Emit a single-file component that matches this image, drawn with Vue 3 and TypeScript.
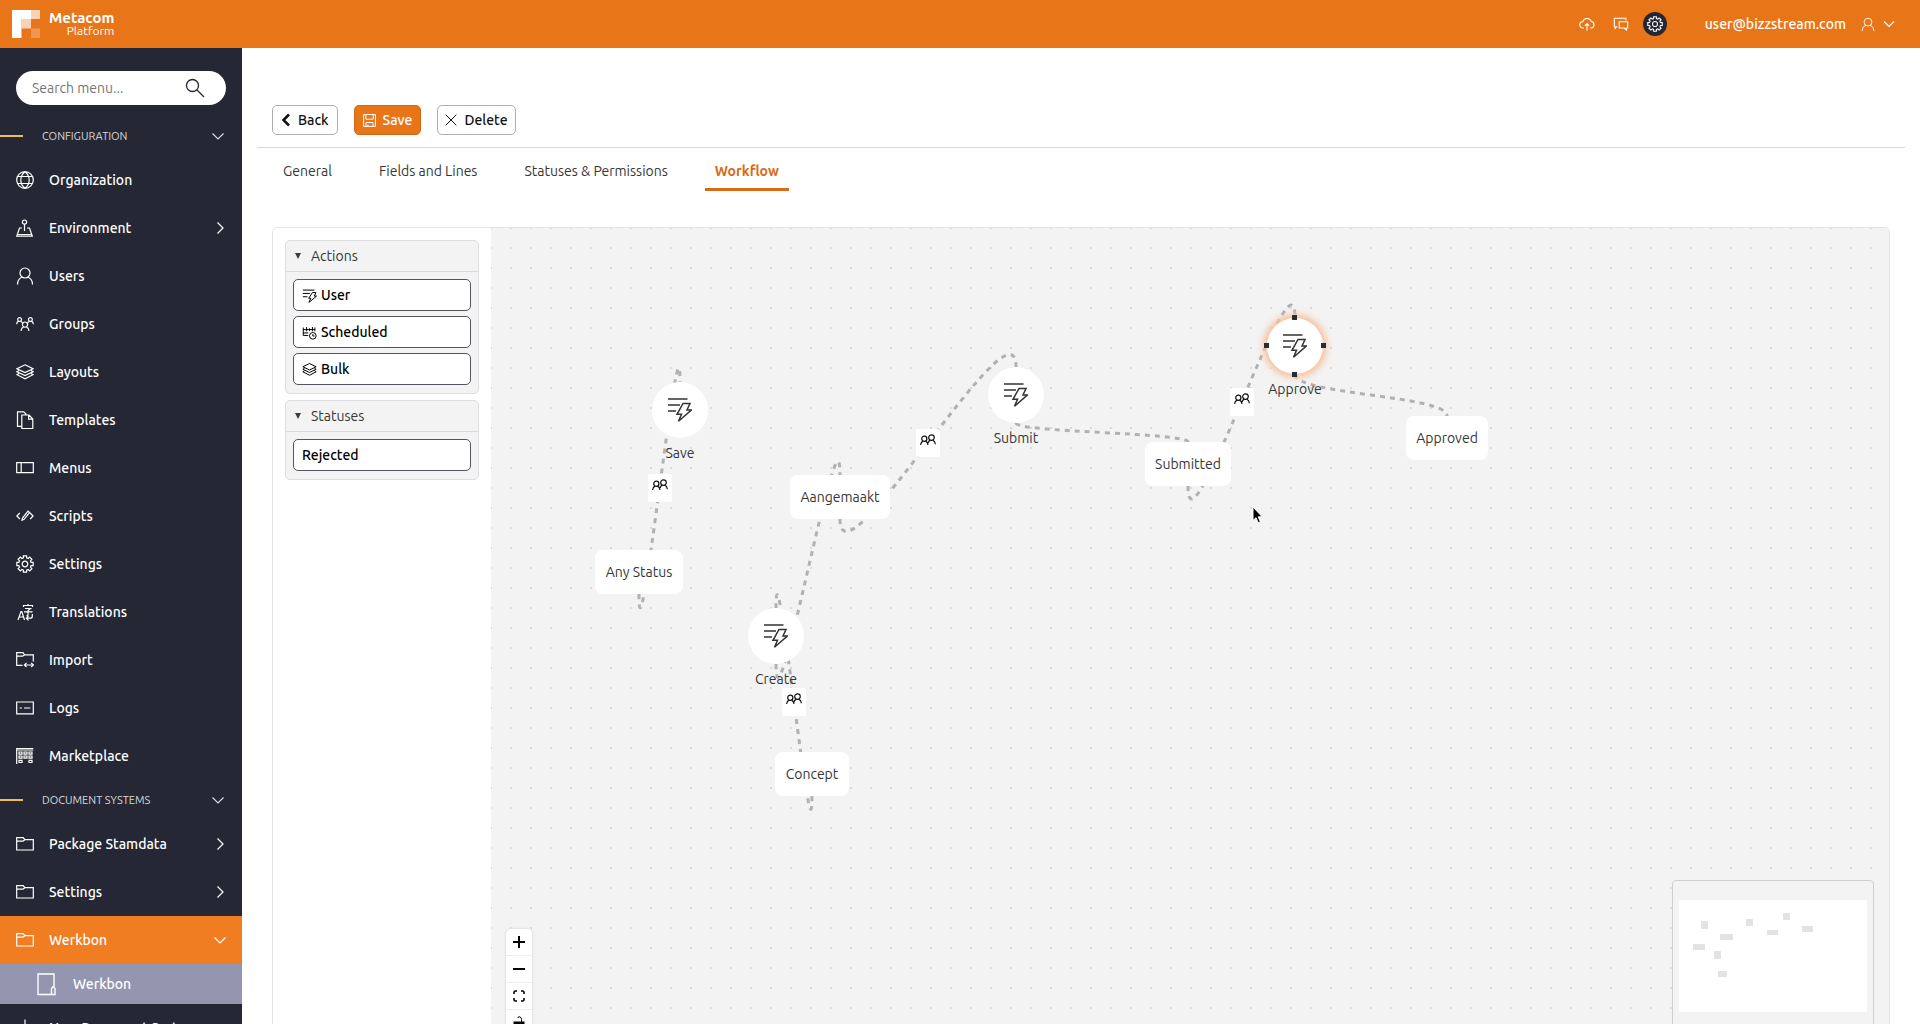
<script setup lang="ts">
interface NavItem { label: string; icon: string; arrow?: 'right' | 'down' }
interface FlowNode { id: string; label: string; kind: 'action' | 'status'; x: number; y: number; w: number; h: number; selected?: boolean }
interface FlowEdge { from: string; to: string; people?: boolean }

const configuration: NavItem[] = [
  { label: 'Organization', icon: 'globe' },
  { label: 'Environment', icon: 'environment', arrow: 'right' },
  { label: 'Users', icon: 'user' },
  { label: 'Groups', icon: 'groups' },
  { label: 'Layouts', icon: 'layers' },
  { label: 'Templates', icon: 'copy' },
  { label: 'Menus', icon: 'menus' },
  { label: 'Scripts', icon: 'script' },
  { label: 'Settings', icon: 'gear' },
  { label: 'Translations', icon: 'translate' },
  { label: 'Import', icon: 'import' },
  { label: 'Logs', icon: 'logs' },
  { label: 'Marketplace', icon: 'market' },
]
const documents: NavItem[] = [
  { label: 'Package Stamdata', icon: 'folder', arrow: 'right' },
  { label: 'Settings', icon: 'folder', arrow: 'right' },
]
const tabs = ['General', 'Fields and Lines', 'Statuses & Permissions', 'Workflow']
const actions = [
  { label: 'User', icon: 'bolt' },
  { label: 'Scheduled', icon: 'schedule' },
  { label: 'Bulk', icon: 'layers' },
]

// x and y are the centre of each node on the canvas
const nodes: FlowNode[] = [
  { id: 'save', label: 'Save', kind: 'action', x: 189, y: 182, w: 56, h: 56 },
  { id: 'submit', label: 'Submit', kind: 'action', x: 525, y: 167, w: 56, h: 56 },
  { id: 'approve', label: 'Approve', kind: 'action', x: 804, y: 118, w: 56, h: 56, selected: true },
  { id: 'create', label: 'Create', kind: 'action', x: 285, y: 408, w: 56, h: 56 },
  { id: 'any', label: 'Any Status', kind: 'status', x: 148, y: 344, w: 88, h: 44 },
  { id: 'made', label: 'Aangemaakt', kind: 'status', x: 349, y: 269, w: 100, h: 44 },
  { id: 'concept', label: 'Concept', kind: 'status', x: 321, y: 546, w: 74, h: 44 },
  { id: 'submitted', label: 'Submitted', kind: 'status', x: 697, y: 236, w: 86, h: 44 },
  { id: 'approved', label: 'Approved', kind: 'status', x: 956, y: 210, w: 82, h: 44 },
]
const edges: FlowEdge[] = [
  { from: 'any', to: 'save', people: true },
  { from: 'concept', to: 'create', people: true },
  { from: 'create', to: 'made' },
  { from: 'made', to: 'submit', people: true },
  { from: 'submit', to: 'submitted' },
  { from: 'submitted', to: 'approve', people: true },
  { from: 'approve', to: 'approved' },
]

function ends(e: FlowEdge) {
  const a = nodes.find(n => n.id === e.from)!
  const b = nodes.find(n => n.id === e.to)!
  return { x1: a.x, y1: a.y + a.h / 2, x2: b.x, y2: b.y - b.h / 2 }
}
function edgePath(e: FlowEdge): string {
  const { x1, y1, x2, y2 } = ends(e)
  const d = y2 - y1
  const c = d >= 0 ? d / 2 : 6.25 * Math.sqrt(-d)
  return `M${x1} ${y1}C${x1} ${y1 + c} ${x2} ${y2 - c} ${x2} ${y2}`
}
function edgeMiddle(e: FlowEdge) {
  const { x1, y1, x2, y2 } = ends(e)
  return { left: Math.round((x1 + x2) / 2) + 'px', top: Math.round((y1 + y2) / 2) + 'px' }
}

const gearPath = (() => {
  const pts: string[] = []
  const add = (r: number, deg: number) => {
    const a = (deg * Math.PI) / 180
    pts.push(`${(9 + r * Math.cos(a)).toFixed(2)} ${(9 + r * Math.sin(a)).toFixed(2)}`)
  }
  for (let k = 0; k < 8; k++) {
    const m = k * 45
    add(6.3, m - 15); add(8.3, m - 11); add(8.3, m + 11); add(6.3, m + 15)
  }
  return 'M' + pts.join('L') + 'Z'
})()

// every glyph is drawn in an 18 by 18 box
const icons: Record<string, string> = {
  globe: 'M9 .7a8.3 8.3 0 1 0 0 16.6A8.3 8.3 0 1 0 9 .7M9 .7C3.4 5 3.4 13 9 17.3M9 .7c5.6 4.3 5.6 12.3 0 16.6M1.600 5.500h14.800M1.600 12.500h14.800',
  environment: 'M8.5 1a2.1 2.1 0 1 0 0 4.200a2.100 2.100 0 1 0 0-4.200M8.500 5.200v6.800M6 9H3.500L.700 17.200h15.600L13.500 9H11M.700 15.500h15.600',
  user: 'M9 1a5 5 0 1 0 0 10A5 5 0 1 0 9 1M1.500 17.500c0-4 2-6.500 5-7.500M16.500 17.500c0-4-2-6.500-5-7.500',
  groups: 'M9 7a2.600 2.600 0 1 0 0 5.200A2.600 2.600 0 1 0 9 7M5 16c.2-2.300 1.200-3.600 2.600-4.300M13 16c-.2-2.300-1.200-3.600-2.600-4.300M3.600 2.600a1.900 1.900 0 1 0 0 3.800a1.900 1.900 0 1 0 0-3.800M14.400 2.600a1.900 1.900 0 1 0 0 3.800a1.900 1.900 0 1 0 0-3.800M.6 9.200c.1-1.700.8-2.700 2-3.100M17.400 9.200c-.1-1.700-.8-2.700-2-3.100M4.800 6.100l2 2.200M13.200 6.100l-2 2.200',
  layers: 'M9 1.800L17 5.700L9 9.600L1 5.700ZM3 7.500L1 8.700l8 3.900l8-3.900L15 7.500M3 10.500L1 11.700l8 4.200l8-4.200l-2-1.200',
  copy: 'M5.800 15.300H1.500V.8h6.300l2.500 2.700M5.800 4h7.300l3.700 4v9.500H5.800ZM12.600 4.200v4h4',
  menus: 'M.700 3.700h16.600v10H.700ZM5.200 3.700v10',
  script: 'M3.800 6L.9 9l2.900 3M14.200 6l2.900 3l-2.900 3M6 13.300l.5-2.300l5.500-6.800l1.600 1.400l-5.500 6.700ZM8.800 11.500l3-3.800',
  translate: 'M2 17L5 8.500h.8L8.500 17M3 14h4.600M7.500 4V2.500h9V4M12 1v1.500M9 5.500h5.500L12 7.500v4.300q0 1-1.500.8M8 8.800h8.500M16.300 11v2.200q0 2-2 2H10.500M12.500 13l-2.200 2.200l2.200 2.200',
  import: 'M6.500 14.300H.7V1.700H7l1.500 2.200h8.800v6.500M.7 5.200H6.500L8.500 3.900M8.500 14h8.700M10.500 11.900L8.400 14l2.100 2.100M15.200 11.900l2.100 2.100l-2.100 2.100',
  logs: 'M.7 3h16.600v11.800H.7ZM3.700 9h2.200M8 9h6.300',
  market: 'M.7 17V1.500h16.600M.7 3h16.600M3 5h3v2.200H3ZM8 5h3v2.200H8ZM13 5h3v2.200h-3ZM3 9h3v2.200H3ZM8 9h3v2.200H8ZM13 9h3v2.200h-3ZM3 13.300h3v2.200H3ZM13 13.300h3v2.200h-3Z',
  folder: 'M.7 15V2.700h6.500l1.600 2h8.500V15ZM.7 6.200H7l1.800-1.500',
  plus: 'M9 .5v17M.5 9h17',
  cloud: 'M5.500 13.500H4.500a3.500 3.500 0 0 1-.3-7a5 5 0 0 1 9.500-.5a3.800 3.800 0 0 1 0 7.500h-1.500M9 16.500V8.500M6.500 11L9 8.500l2.500 2.500',
  chat: 'M5 12H4L2.500 14v-2H1.500V2.500h13V5M7 6.500h9.500v7H15v2.200l-2.300-2.200H7Z',
  gear: gearPath + 'M9 6.200a2.800 2.800 0 1 0 0 5.600a2.800 2.800 0 1 0 0-5.600',
  bolt: 'M1 2.500h14M1 6.500h8.500M1 10.500h5.500M12.500 5.500h4.200l-2 4.200h2.800L8.300 17.300l2.300-5H8Z',
  schedule: 'M1.500 3v9.500h6M1.500 5.500h14M5.500 2.500v5M9 4v3M12.500 2.500v5M15.500 3v4.500M1.500 9.500h6M13 9a4 4 0 1 0 0 8a4 4 0 1 0 0-8M13 11v2.200h2',
}

const miniNodes = [
  [22, 21, 7, 8], [67, 19, 7, 7], [104, 13, 7, 7], [35, 51, 7, 8],
  [14, 44, 12, 6], [41, 34, 13, 6], [39, 71, 9, 6], [88, 30, 11, 5], [123, 26, 11, 6],
]
</script>

<template>
  <div class="app">
    <header class="topbar">
      <a class="brand" href="#">
        <svg class="logo" width="28" height="28" viewBox="0 0 28 28" fill="#fff" aria-hidden="true">
          <path d="M0 0h19v9H9.500v19H0Z" /><path d="M19 0h9v9h-9ZM9.500 9H19v9.500H9.500Z" opacity=".68" /><path d="M19 18.500h9V28h-9Z" opacity=".25" />
        </svg>
        <span class="brand-text"><strong>Metacom</strong><small>Platform</small></span>
      </a>
      <div class="tools">
        <button class="tool" aria-label="Upload"><svg class="ico" viewBox="0 0 18 18"><path :d="icons.cloud" /></svg></button>
        <button class="tool" aria-label="Messages"><svg class="ico" viewBox="0 0 18 18"><path :d="icons.chat" /></svg></button>
        <button class="tool dark" aria-label="Configuration"><svg class="ico" viewBox="0 0 18 18"><path :d="icons.gear" /></svg></button>
        <button class="account">
          user@bizzstream.com
          <svg class="ico person" viewBox="0 0 18 18"><path :d="icons.user" /></svg>
          <svg class="chev" width="12" height="12" viewBox="0 0 12 12"><path d="M1 3.500l5 5l5-5" /></svg>
        </button>
      </div>
    </header>

    <div class="body">
      <nav class="sidebar">
        <form class="search" @submit.prevent>
          <input type="text" placeholder="Search menu..." aria-label="Search menu" />
          <button aria-label="Search">
            <svg width="20" height="20" viewBox="0 0 20 20"><circle cx="7.500" cy="7.500" r="6" /><path d="M12 12l7 7" /></svg>
          </button>
        </form>

        <button class="section">
          <span>CONFIGURATION</span>
          <svg class="chev" width="12" height="12" viewBox="0 0 12 12"><path d="M.5 3.500l5.500 5.500l5.500-5.500" /></svg>
        </button>
        <a v-for="item in configuration" :key="item.label" class="item" href="#">
          <svg class="ico" viewBox="0 0 18 18"><path :d="icons[item.icon]" /></svg>
          <span>{{ item.label }}</span>
          <svg v-if="item.arrow" class="chev" width="12" height="12" viewBox="0 0 12 12"><path d="M3.500 .5L9 6l-5.500 5.500" /></svg>
        </a>

        <button class="section">
          <span>DOCUMENT SYSTEMS</span>
          <svg class="chev" width="12" height="12" viewBox="0 0 12 12"><path d="M.5 3.500l5.500 5.500l5.500-5.500" /></svg>
        </button>
        <a v-for="item in documents" :key="item.label" class="item" href="#">
          <svg class="ico" viewBox="0 0 18 18"><path :d="icons[item.icon]" /></svg>
          <span>{{ item.label }}</span>
          <svg class="chev" width="12" height="12" viewBox="0 0 12 12"><path d="M3.500 .5L9 6l-5.500 5.500" /></svg>
        </a>
        <a class="item active" href="#">
          <svg class="ico" viewBox="0 0 18 18"><path :d="icons.folder" /></svg>
          <span>Werkbon</span>
          <svg class="chev" width="12" height="12" viewBox="0 0 12 12"><path d="M.5 3.500l5.500 5.500l5.500-5.500" /></svg>
        </a>
        <a class="sub" href="#">
          <svg width="19" height="23" viewBox="0 0 19 23"><path d="M14 21.500H1V1h16v12.500M14.500 21.500v-6l1.700-2l1.800 2v6Z" /></svg>
          <span>Werkbon</span>
        </a>
        <a class="item" href="#">
          <svg class="ico" viewBox="0 0 18 18"><path :d="icons.plus" /></svg>
          <span>New Document System</span>
        </a>
      </nav>

      <main class="main">
        <div class="toolbar">
          <button class="btn back">
            <svg width="10" height="14" viewBox="0 0 10 14"><path d="M8 1.500L2.500 7L8 12.500" /></svg>Back
          </button>
          <button class="btn primary">
            <svg width="13" height="13" viewBox="0 0 13 13"><path d="M.6 .6h11.800v11.800H.6ZM2.800 .6v4.600h7.400V.6M3 12.400V8.500h7v3.900M5 10.500v1.900" /></svg>Save
          </button>
          <button class="btn delete">
            <svg width="12" height="12" viewBox="0 0 12 12"><path d="M.7 .7l10.600 10.600M11.300 .7L.7 11.300" /></svg>Delete
          </button>
        </div>

        <div class="tabs" role="tablist">
          <button v-for="t in tabs" :key="t" role="tab" class="tab" :class="{ current: t === 'Workflow' }" :aria-selected="t === 'Workflow'">{{ t }}</button>
        </div>

        <section class="designer">
          <aside class="palette">
            <details class="group" open>
              <summary>Actions</summary>
              <div class="entries">
                <button v-for="a in actions" :key="a.label" class="entry">
                  <svg width="15" height="15" viewBox="0 0 18 18"><path :d="icons[a.icon]" /></svg>{{ a.label }}
                </button>
              </div>
            </details>
            <details class="group" open>
              <summary>Statuses</summary>
              <div class="entries"><button class="entry">Rejected</button></div>
            </details>
          </aside>

          <div class="canvas">
            <svg class="edges" aria-hidden="true"><path v-for="e in edges" :key="e.from + e.to" :d="edgePath(e)" /></svg>

            <div v-for="n in nodes" :key="n.id" class="node" :class="[n.kind, { selected: n.selected }]"
              :style="{ left: n.x - n.w / 2 + 'px', top: n.y - n.h / 2 + 'px', width: n.w + 'px', height: n.h + 'px' }">
              <svg v-if="n.kind === 'action'" width="24" height="24" viewBox="0 0 24 24">
                <path d="M0 1h19.500M0 7h12M0 13h8M15 5.500h7l-3 6.500h4.300L10.500 23.300l3-7H9Z" />
              </svg>
              <span>{{ n.label }}</span>
              <template v-if="n.selected"><i class="grip t" /><i class="grip r" /><i class="grip b" /><i class="grip l" /></template>
            </div>

            <template v-for="e in edges" :key="e.from">
              <button v-if="e.people" class="people" :style="edgeMiddle(e)" aria-label="Permissions">
                <svg width="16" height="12" viewBox="0 0 16 12">
                  <circle cx="4.300" cy="4.800" r="2.600" /><circle cx="11.500" cy="3.600" r="2.800" />
                  <path d="M.6 11c.2-2.200 1.200-3.400 2.500-3.900M8 11C7.800 8.800 6.800 7.600 5.500 7.100M8 9c.4-1.500 1.200-2.300 2.300-2.900M15.400 10.200c-.2-2.200-1.200-3.500-2.700-4.100" />
                </svg>
              </button>
            </template>

            <svg class="pointer" width="14" height="20" viewBox="0 0 14 20" aria-hidden="true">
              <path d="M1 1v13.500l3-2.800l2.200 5l2.200-1l-2.200-4.900h4Z" />
            </svg>

            <div class="controls">
              <button aria-label="Zoom in"><svg width="12" height="12" viewBox="0 0 12 12"><path d="M6 0v12M0 6h12" stroke-width="2" /></svg></button>
              <button aria-label="Zoom out"><svg width="12" height="12" viewBox="0 0 12 12"><path d="M0 6h12" stroke-width="2" /></svg></button>
              <button aria-label="Fit view"><svg width="12" height="12" viewBox="0 0 12 12"><path d="M1 4V2.500Q1 1 2.500 1H4M8 1h1.500Q11 1 11 2.500V4M11 8v1.500Q11 11 9.500 11H8M4 11H2.500Q1 11 1 9.500V8" stroke-width="1.600" /></svg></button>
              <button aria-label="Lock"><svg width="12" height="14" viewBox="0 0 12 14"><path d="M5 2q0-1.300 1.200-1.300Q9 .8 8.500 6" stroke-width="1" /><path d="M1.500 6.500h9v6h-9Z" stroke-width="2" fill="#000" /></svg></button>
            </div>

            <div class="minimap">
              <svg viewBox="0 0 188 112" width="188" height="112" aria-label="Mini map">
                <rect width="188" height="112" fill="#fff" />
                <rect v-for="(m, i) in miniNodes" :key="i" :x="m[0]" :y="m[1]" :width="m[2]" :height="m[3]" fill="#e3e3e3" />
              </svg>
            </div>
          </div>
        </section>
      </main>
    </div>
  </div>
</template>

<style>
body { margin: 0; }
</style>

<style scoped>
.app { height: 100vh; overflow: hidden; display: flex; flex-direction: column; font: 14px/20px "Ubuntu", "Noto Sans", sans-serif; color: #363636; background: #fff; }
.app *, .app *::before { box-sizing: border-box; }
button, input { font: inherit; color: inherit; margin: 0; padding: 0; border: 0; background: none; }
a { color: inherit; text-decoration: none; }
svg { flex: none; fill: none; stroke: currentColor; stroke-width: 1; }
.ico { width: 18px; height: 18px; stroke-width: 1.2; }
.chev { stroke-width: 1.2; }

.topbar { height: 48px; flex: none; display: flex; align-items: center; justify-content: space-between; padding: 0 25px 0 12px; background: #e97519; color: #fff; }
.brand { display: flex; align-items: center; gap: 9px; }
.logo { fill: #fff; stroke: none; }
.brand-text { display: flex; flex-direction: column; align-items: flex-end; line-height: 13px; }
.brand-text strong { font-size: 15px; font-weight: 700; }
.brand-text small { font-size: 12px; }
.tools { display: flex; align-items: center; gap: 10px; }
.tool { width: 24px; height: 24px; display: grid; place-items: center; border-radius: 50%; }
.tool .ico { width: 16px; height: 16px; }
.tool.dark { background: #252834; }
.account { display: flex; align-items: center; margin-left: 28px; font-weight: 500; }
.person { width: 14px; height: 15px; margin: 0 8px 0 15px; }

.body { flex: 1; min-height: 0; display: flex; align-items: stretch; }
.sidebar { width: 242px; flex: none; overflow: hidden; background: #252834; color: #fff; }
.search { display: flex; align-items: center; height: 34px; margin: 23px 16px 11px; padding: 0 21px 0 16px; border-radius: 17px; background: #fff; }
.search input { flex: 1; min-width: 0; outline: 0; }
.search input::placeholder { color: #757575; opacity: 1; }
.search button { height: 20px; color: #252834; }
.search svg { display: block; stroke-width: 1.300; }
.section { position: relative; width: 100%; height: 40px; display: flex; align-items: center; justify-content: space-between; padding: 0 18px 0 42px; font-size: 11px; color: #d9dade; }
.section::before { content: ""; position: absolute; left: 0; top: 19px; width: 23px; height: 2px; background: #f0bd4c; }
.item { display: flex; align-items: center; height: 48px; padding: 0 16px; gap: 15px; font-weight: 500; }
.item span { flex: 1; white-space: nowrap; }
.active { background: #f07d22; }
.sub { display: flex; align-items: center; height: 40px; padding: 0 37px; gap: 17px; font-weight: 500; background: #9496b0; }
.sub svg { stroke-width: 1.400; }

.main { flex: 1; min-width: 0; padding: 57px 15px 0; }
.toolbar { display: flex; gap: 16px; padding: 0 15px 12px; border-bottom: 1px solid #d9d9d9; }
.btn { height: 30px; display: flex; align-items: center; gap: 7px; padding: 0 8px; border: 1px solid #adadad; border-radius: 5px; color: #111; font-weight: 500; }
.back svg { stroke-width: 2.500; }
.btn.primary { background: #e97519; border-color: #cf6a1b; color: #fff; }
.btn.delete { padding: 0 7px; }
.tabs { display: flex; gap: 27px; padding: 2px 16px 0; }
.tab { height: 41px; padding: 4px 10px 0; border-bottom: 3px solid transparent; }
.current { color: #d96a17; border-color: #d96a17; font-weight: 600; }

.designer { display: flex; height: 825px; margin: 36px 15px 0; border: 1px solid #e4e4e6; border-radius: 5px; overflow: hidden; }
.palette { width: 218px; flex: none; padding: 12px; display: flex; flex-direction: column; gap: 6px; }
.group { border: 1px solid #dcdce1; border-radius: 5px; background: #f3f3f3; }
summary { display: flex; align-items: center; gap: 10px; height: 31px; padding: 0 9px; border-bottom: 1px solid #d9d9de; }
summary::before { content: ""; border: 3px solid transparent; border-top: 6px solid #3c3c46; border-bottom: 0; }
.entries { display: flex; flex-direction: column; gap: 5px; padding: 7px 7px 8px; }
.entry { height: 32px; display: flex; align-items: center; gap: 4px; padding: 0 8px; border: 1px solid #55555d; border-radius: 5px; background: #fff; color: #000; font-weight: 500; }
.entry svg { stroke-width: 1.200; }

.canvas { position: relative; flex: 1; min-width: 0; overflow: hidden; background: #f3f3f3 radial-gradient(circle, #dadade 1px, transparent 1px) -10px -10px / 20px 20px; }
.edges { position: absolute; inset: 0; width: 100%; height: 100%; stroke: #b1b1b5; stroke-width: 3; stroke-dasharray: 5; }
.node { position: absolute; display: grid; place-items: center; background: #fff; white-space: nowrap; }
.status { border-radius: 8px; }
.action { border-radius: 50%; }
.action svg { stroke: #333; stroke-width: 1.500; }
.action span { position: absolute; top: 61px; }
.selected { box-shadow: 0 0 6px 4px #f5c4a4; }
.grip { position: absolute; width: 5px; height: 5px; background: #2b2b2b; }
.t { top: -3px; left: 25px; }
.r { top: 25px; right: -3px; }
.b { bottom: -3px; left: 25px; }
.l { top: 25px; left: -3px; }
.people { position: absolute; width: 24px; height: 28px; display: grid; justify-content: center; padding-top: 5px; transform: translate(-50%, -50%); border-radius: 2px; background: #fff; color: #111; }
.people svg { stroke-width: 1.200; }
.pointer { position: absolute; left: 761px; top: 278px; fill: #000; stroke: #fff; }
.controls { position: absolute; left: 15px; bottom: 14px; width: 26px; border-radius: 5px; overflow: hidden; background: #fff; box-shadow: 0 0 2px 1px #e2e2e2; color: #000; }
.controls button { width: 26px; height: 27px; display: grid; place-items: center; border-bottom: 1px solid #eee; }
.minimap { position: absolute; right: 15px; bottom: 19px; width: 202px; height: 152px; display: grid; place-items: center; border: 1px solid #cfcfcf; border-radius: 4px; background: #f3f3f3; }
.minimap svg { stroke: none; }
</style>
